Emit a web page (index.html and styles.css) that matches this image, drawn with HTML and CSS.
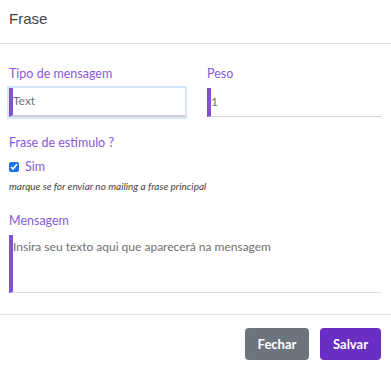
FILE: index.html
```html
<!DOCTYPE html>
<html lang="pt">
<head>
    <meta charset="UTF-8">
    <meta name="viewport" content="width=device-width, initial-scale=1.0">
    <title>Frase</title>
    <link rel="stylesheet" href="styles.css">
</head>
<body>
    <div class="modal">
        <div class="modal-header">
            <h5 class="modal-title">Frase</h5>
        </div>
        <div class="modal-body">
            <div class="row">
                <div class="form-group">
                    <label for="tipo">Tipo de mensagem</label>
                    <input type="text" id="tipo" class="field focused" value="Text">
                </div>
                <div class="form-group">
                    <label for="peso">Peso</label>
                    <input type="text" id="peso" class="field" value="1">
                </div>
            </div>
            <div class="form-group stimulus">
                <label>Frase de estimulo ?</label>
                <div class="check">
                    <input type="checkbox" id="sim" checked>
                    <label for="sim">Sim</label>
                </div>
                <small class="hint">marque se for enviar no mailing a frase principal</small>
            </div>
            <div class="form-group message">
                <label for="mensagem">Mensagem</label>
                <textarea id="mensagem" class="field area" placeholder="Insira seu texto aqui que aparecerá na mensagem"></textarea>
            </div>
        </div>
        <div class="modal-footer">
            <button class="btn btn-secondary">Fechar</button>
            <button class="btn btn-primary">Salvar</button>
        </div>
    </div>
</body>
</html>
```

FILE: styles.css
```css
body {
    margin: 0;
    font-family: Lato, "Open Sans", sans-serif;
    background-color: #fff;
    color: #333;
}
.modal-header {
    height: 43px;
    padding: 0 9px;
    display: flex;
    align-items: center;
    border-bottom: 1px solid #e2e2e2;
}
.modal-title {
    margin: 0;
    margin-top: -7px;
    font-family: "Liberation Sans", Arial, sans-serif;
    font-size: 15px;
    font-weight: normal;
    color: #3f4449;
}
.modal-body {
    padding: 22px 10px 21px 9px;
}
.row {
    display: grid;
    grid-template-columns: 176px 1fr;
    column-gap: 22px;
}
label {
    display: block;
    font-size: 12.5px;
    color: #8a58d8;
    margin-bottom: 6px;
    line-height: 16px;
}
.field {
    display: block;
    box-sizing: border-box;
    width: 100%;
    height: 29px;
    margin: 0;
    padding: 0 0 2px 0;
    border: none;
    border-left: 4px solid #8350d3;
    border-bottom: 1px solid #d4d4d4;
    font-family: inherit;
    font-size: 12px;
    color: #707070;
    background: #fff;
    outline: none;
}
.field.focused {
    border-bottom: 2px solid #cfcfcf;
    box-shadow: 0 0 0 2px #d3e8fb;
}
.stimulus {
    margin-top: 18px;
}
.check {
    display: flex;
    align-items: center;
    margin-top: 8px;
}
.check input {
    width: 10px;
    height: 10px;
    margin: 0 6px 0 0;
    accent-color: #1a73e8;
}
.check label {
    margin: 0;
}
.hint {
    display: block;
    margin-top: 5px;
    font-size: 10px;
    font-style: italic;
    color: #444;
}
.message {
    margin-top: 21px;
}
.area {
    height: 58px;
    padding: 4px 0 0 0;
    resize: none;
    border-bottom: 1px solid #dcdcdc;
}
.area::placeholder {
    color: #707070;
}
.modal-footer {
    border-top: 1px solid #e2e2e2;
    padding: 13px 10px 10px;
    display: flex;
    justify-content: flex-end;
    gap: 11px;
}
.btn {
    height: 32px;
    padding: 0 12px;
    border: none;
    border-radius: 4px;
    font-family: inherit;
    font-size: 13px;
    font-weight: bold;
    color: #fff;
    cursor: pointer;
}
.btn-secondary {
    background-color: #6c757d;
    width: 64px;
}
.btn-primary {
    background-color: #6a2fc2;
    width: 61px;
}
```
